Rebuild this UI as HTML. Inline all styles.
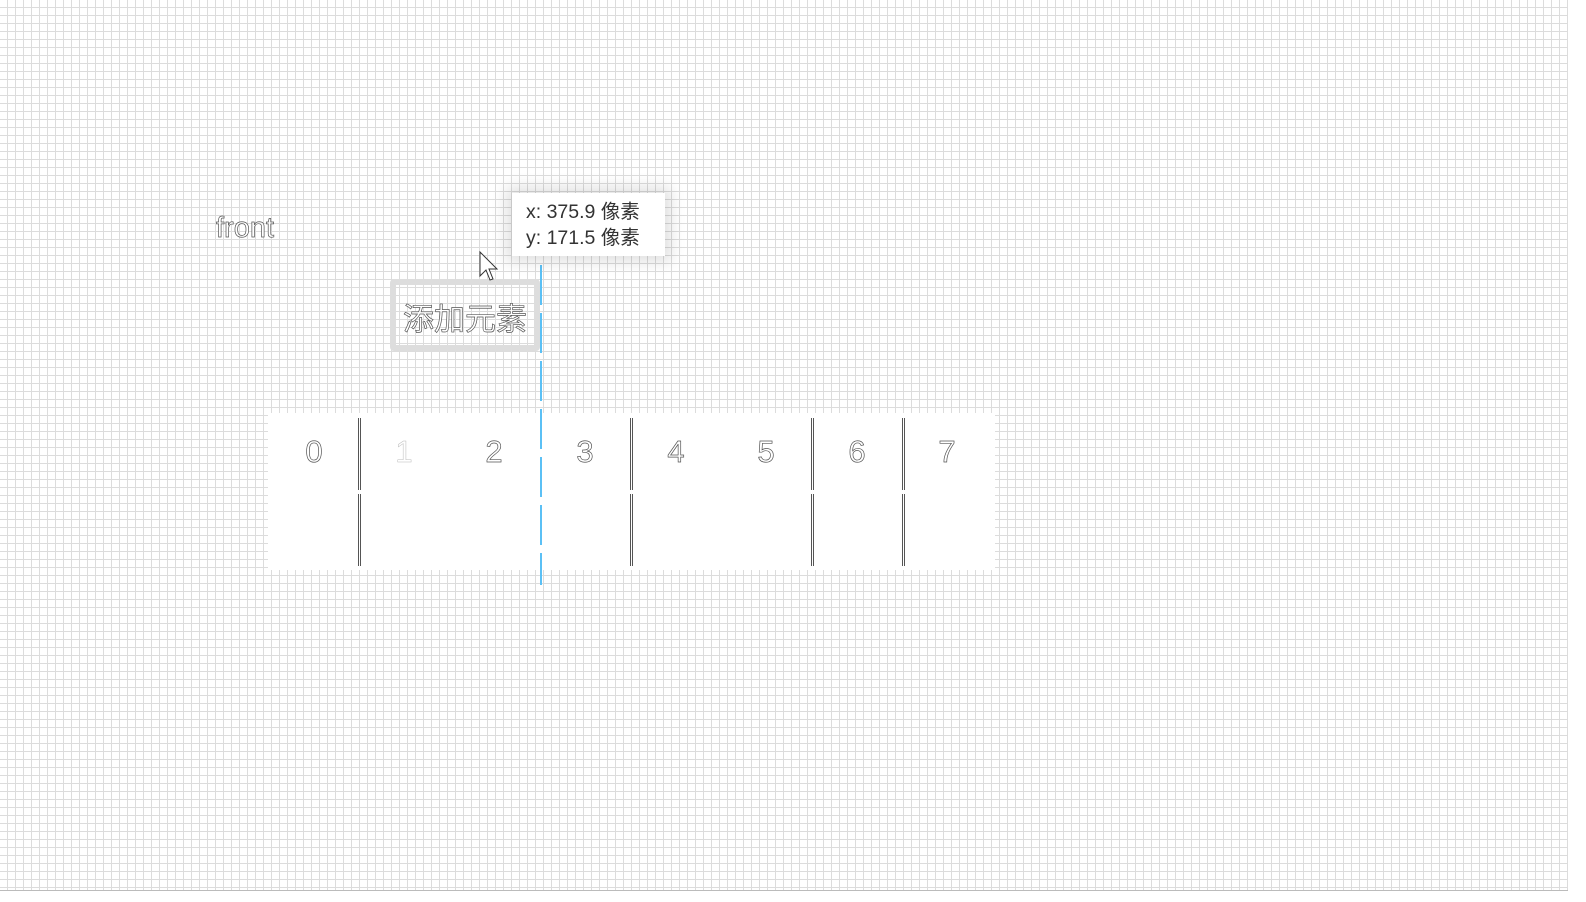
<!DOCTYPE html><html><head><meta charset="utf-8"><style>
body{margin:0;width:1586px;height:902px;overflow:hidden;background:#fff;position:relative;font-family:"Liberation Sans","Noto Sans CJK SC",sans-serif}
.grid{position:absolute;left:0;top:0;width:1568px;height:890px;background-color:#fff;
background-image:linear-gradient(to right,#dcdcdc 1px,transparent 1px),linear-gradient(to bottom,#dcdcdc 1px,transparent 1px);background-size:8px 8px;background-position:7px 7px;border-bottom:1px solid #bbb}
.a{position:absolute}
.ol{color:#fff;-webkit-text-stroke:0.7px #555}
.tbl{left:268px;top:413px;width:727px;height:157px;background:#fff}
.d{position:absolute;width:1px;border-left:1px solid #555;border-right:1px solid #555;width:1px}
.n{position:absolute;top:434px;font-size:31px;width:40px;text-align:center;margin-left:-20px}
</style></head><body>
<div class="grid"></div>
<div class="a ol" style="left:216px;top:212px;font-size:29px">front</div>
<div class="a" style="left:390px;top:279px;width:138px;height:60px;border:6px solid #ddd;border-radius:4px"></div>
<div class="a ol" style="left:403px;top:294px;font-size:31px">添加元素</div>
<div class="a tbl"></div>
<div class="d" style="left:358px;top:418px;height:72px"></div><div class="d" style="left:358px;top:494px;height:72px"></div>
<div class="d" style="left:630px;top:418px;height:72px"></div><div class="d" style="left:630px;top:494px;height:72px"></div>
<div class="d" style="left:811px;top:418px;height:72px"></div><div class="d" style="left:811px;top:494px;height:72px"></div>
<div class="d" style="left:902px;top:418px;height:72px"></div><div class="d" style="left:902px;top:494px;height:72px"></div>
<div class="n ol" style="left:314px">0</div><div class="n ol" style="left:404px;-webkit-text-stroke:0.5px #bbb">1</div><div class="n ol" style="left:494px">2</div><div class="n ol" style="left:585px">3</div>
<div class="n ol" style="left:676px">4</div><div class="n ol" style="left:766px">5</div><div class="n ol" style="left:857px">6</div><div class="n ol" style="left:947px">7</div>
<div class="a" style="left:540px;top:265px;width:2px;height:320px;background:repeating-linear-gradient(to bottom,#5bc0f5 0 40px,transparent 40px 48px)"></div>
<div class="a" style="left:512px;top:193px;width:153px;height:63px;background:#fff;box-shadow:0 0 14px 6px rgba(0,0,0,0.12);font-size:19.5px;color:#333;line-height:26px;padding:6px 0 0 14px;box-sizing:border-box;white-space:nowrap">x: 375.9 像素<br>y: 171.5 像素</div>
<svg class="a" style="left:478px;top:250px" width="22" height="36" viewBox="0 0 22 36"><path d="M2 2 L2 26 L8 20 L12 30 L15 29 L11 19 L19 19 Z" fill="#fff" stroke="#333" stroke-width="1"/></svg>
</body></html>
